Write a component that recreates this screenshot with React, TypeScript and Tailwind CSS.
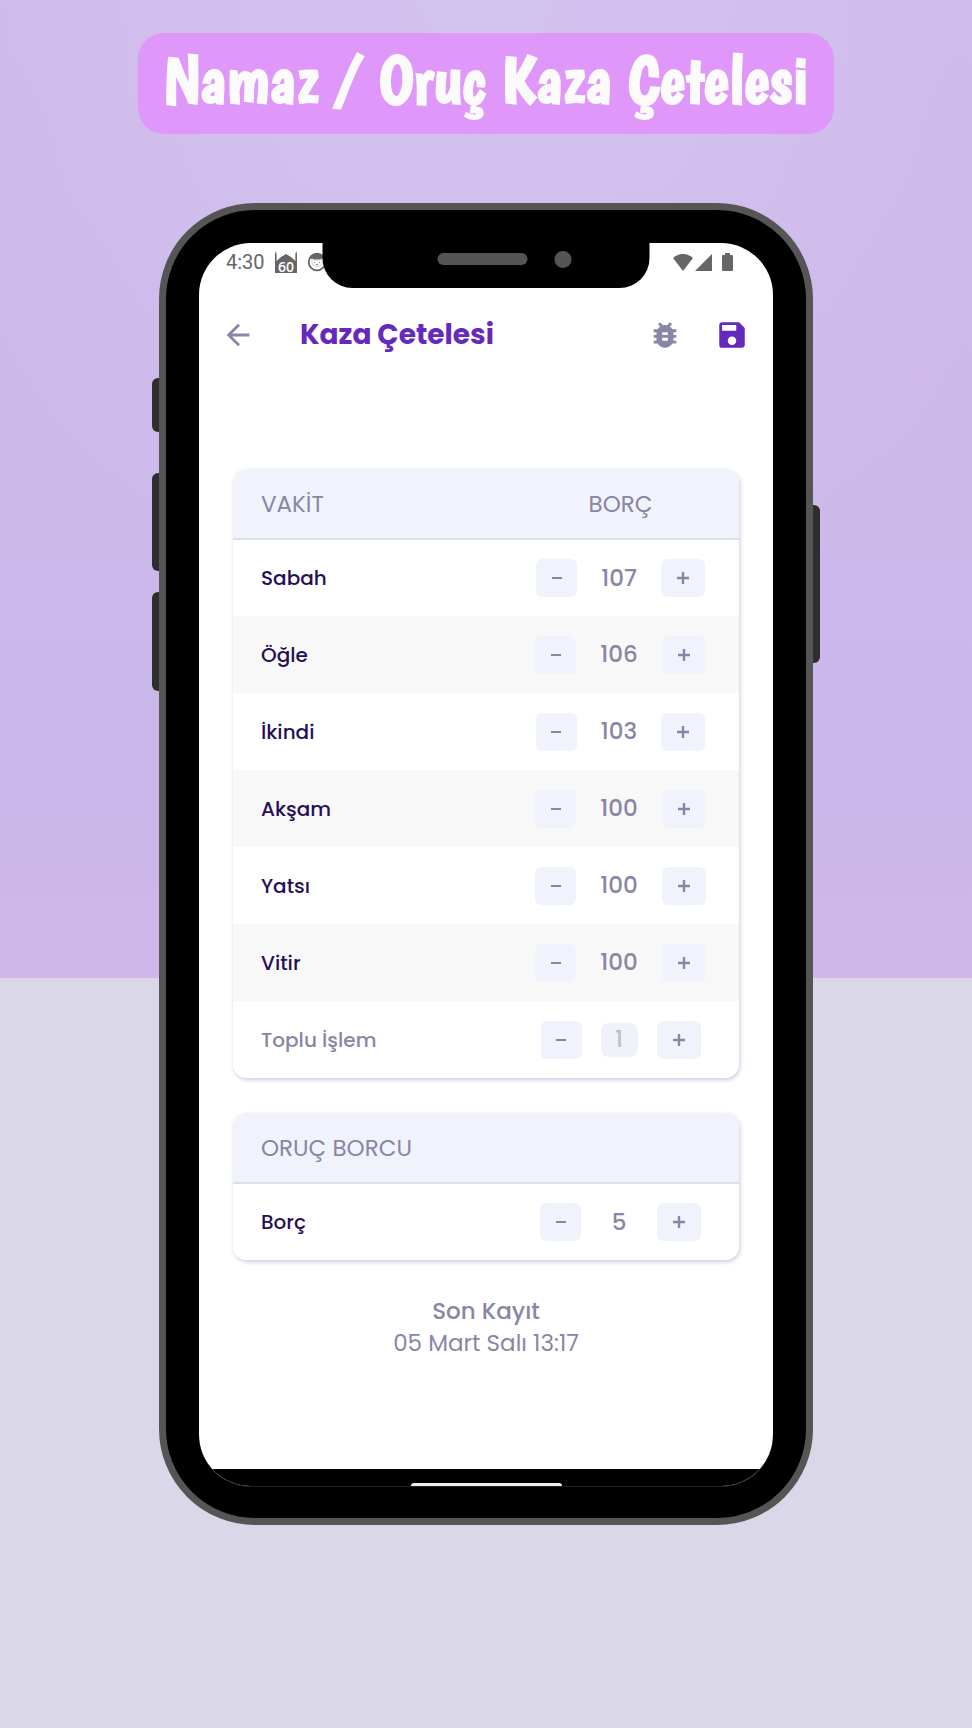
import { useState } from "react";
import { MdArrowBack, MdBugReport, MdSave } from "react-icons/md";

const FONT = "font-['Poppins','Noto_Sans',sans-serif]";

const PRAYERS = [
  { name: "Sabah", debt: 107 },
  { name: "Öğle", debt: 106 },
  { name: "İkindi", debt: 103 },
  { name: "Akşam", debt: 100 },
  { name: "Yatsı", debt: 100 },
  { name: "Vitir", debt: 100 },
];

function MinusButton({ label, onClick }: { label: string; onClick: () => void }) {
  return (
    <button
      type="button"
      aria-label={label}
      onClick={onClick}
      className="flex h-[38px] w-[41px] shrink-0 items-center justify-center rounded-md bg-[#f0f3fb]"
    >
      <span className="h-[2px] w-[10px] bg-[#8886a5]" />
    </button>
  );
}

function PlusButton({ label, onClick }: { label: string; onClick: () => void }) {
  return (
    <button
      type="button"
      aria-label={label}
      onClick={onClick}
      className="flex h-[38px] w-[44px] shrink-0 items-center justify-center rounded-md bg-[#f0f3fb] text-[#8886a5]"
    >
      <svg viewBox="0 0 12 12" className="size-3" aria-hidden="true">
        <path d="M6 0v12M0 6h12" stroke="currentColor" strokeWidth="2.400" />
      </svg>
    </button>
  );
}

function Row({ name, initial, striped }: { name: string; initial: number; striped?: boolean }) {
  const [value, setValue] = useState(initial);
  return (
    <tr className={striped ? "h-[77px] bg-[#f8f8f8]" : "h-[77px] bg-white"}>
      <th scope="row" className="pl-7 text-left text-xl font-medium text-[#260f57]">
        {name}
      </th>
      <td>
        <div className="flex items-center justify-center gap-6">
          <MinusButton label={`${name} azalt`} onClick={() => setValue(value - 1)} />
          <span className="min-w-[28px] text-center text-[23px] font-medium text-[#8886a5]">{value}</span>
          <PlusButton label={`${name} artır`} onClick={() => setValue(value + 1)} />
        </div>
      </td>
    </tr>
  );
}

function BulkRow() {
  const [value, setValue] = useState("1");
  const step = (n: number) => setValue(String(Number(value || 0) + n));
  return (
    <tr className="h-[77px] bg-white">
      <th scope="row" className="pl-7 text-left text-xl font-medium text-[#8886a5]">
        <label htmlFor="bulk">Toplu İşlem</label>
      </th>
      <td>
        <div className="flex items-center justify-center gap-[19px]">
          <MinusButton label="Toplu azalt" onClick={() => step(-1)} />
          <input
            id="bulk"
            inputMode="numeric"
            value={value}
            onChange={(e) => setValue(e.target.value)}
            className="h-[34px] w-[37px] rounded-lg bg-[#f0f2fa] text-center text-[23px] font-medium text-[#c0bdd0] outline-none"
          />
          <PlusButton label="Toplu artır" onClick={() => step(1)} />
        </div>
      </td>
    </tr>
  );
}

const CARD =
  "overflow-hidden rounded-[14px] bg-white shadow-[1px_2px_4px_rgba(60,40,130,0.25)]";
const HEAD = "h-[70px] border-b-2 border-[#dbe0ec] bg-[#f0f3fb] text-[23px] text-[#8886a5]";

function MosqueIcon() {
  return (
    <svg viewBox="0 0 22 22" className="size-[22px]" aria-hidden="true">
      <path
        d="M0 22V3L.800 0 1.600 3V10L6 6 11 3 16 6 20.400 10V3L21.200 0 22 3V22Z"
        fill="#666"
      />
      <text x="11" y="20.500" textAnchor="middle" fontSize="14" fontWeight="600" fill="#fff" fontFamily="Open Sans, sans-serif">
        60
      </text>
    </svg>
  );
}

function CatIcon() {
  return (
    <svg viewBox="0 0 20 20" className="size-5" aria-hidden="true">
      <circle cx="10" cy="10" r="8.300" fill="#fff" stroke="#666" strokeWidth="1.800" />
      <path d="M2.500 6C6-.500 14-.500 17.500 6L14 7.500H6Z" fill="#666" />
      <path d="M5 6.500 7.500 8H12.500L15 6.500V11C15 15.500 5 15.500 5 11Z" fill="#fff" stroke="#aaa" strokeWidth=".6" />
      <path d="M7.500 10v1M12.500 10v1M9 12.500h2" stroke="#888" />
    </svg>
  );
}

function StatusBar() {
  return (
    <div className="flex h-[38px] items-center justify-between pl-[27px] pr-[40px] text-[#666]">
      <div className="flex items-center gap-[10px]">
        <span className="font-['Roboto',sans-serif] text-xl leading-5">4:30</span>
        <MosqueIcon />
        <CatIcon />
      </div>
      <div className="flex items-center">
        <svg viewBox="0 0 20 17" className="mr-[2px] h-[17px] w-5" aria-hidden="true">
          <path d="M0 4C6-1.300 14-1.300 20 4L10 17Z" fill="currentColor" />
        </svg>
        <svg viewBox="0 0 17 17" className="mr-2.5 size-[17px]" aria-hidden="true">
          <path d="M17 0V17H0Z" fill="currentColor" />
        </svg>
        <svg viewBox="0 0 11 18" className="h-[18px] w-[11px]" aria-hidden="true">
          <path d="M3 0h5v2H10a1 1 0 0 1 1 1v14a1 1 0 0 1-1 1H1a1 1 0 0 1-1-1V3a1 1 0 0 1 1-1h2Z" fill="currentColor" />
        </svg>
      </div>
    </div>
  );
}

export default function App() {
  return (
    <div
      className={`${FONT} min-h-screen bg-[linear-gradient(transparent_978px,#dad7e8_978px),radial-gradient(600px_700px_at_50%_0,#d3c3ef_0,transparent_100%),linear-gradient(#cfbaea_0,#cdb8ea_500px,#cab7e9_740px,#cfb7e9_978px)] pb-[203px] pt-[33px]`}
    >
      <h1 className="mx-auto flex h-[101px] w-[696px] max-w-full items-center justify-center rounded-[26px] bg-[#df98f9] pb-2 font-['Chewy','Boogaloo','Bubblegum_Sans','Liberation_Sans',sans-serif] text-[67px] font-normal leading-none text-[#fbfbfb] [-webkit-text-stroke:2px_#fbfbfb]">
        Namaz / Oruç Kaza Çetelesi
      </h1>

      <div className="relative mx-auto mt-[69px] w-[654px] max-w-full">
        <span className="absolute -left-[7px] top-[175px] h-[54px] w-3 rounded-l-md bg-[#2e2e2e]" />
        <span className="absolute -left-[7px] top-[270px] h-[98px] w-3 rounded-l-md bg-[#2e2e2e]" />
        <span className="absolute -left-[7px] top-[389px] h-[99px] w-3 rounded-l-md bg-[#2e2e2e]" />
        <span className="absolute -right-[7px] top-[302px] h-[158px] w-3 rounded-r-md bg-[#2e2e2e]" />

        <div className="relative rounded-[96px] border-[7px] border-[#555] bg-black px-[33px] pb-[31px] pt-[33px]">
          <div className="absolute left-1/2 top-[33px] h-[45px] w-[327px] -translate-x-1/2 rounded-b-[30px] bg-black">
            <span className="absolute left-[115px] top-[10px] h-3 w-[90px] rounded-full bg-[#555]" />
            <span className="absolute left-[232px] top-[8px] size-[17px] rounded-full bg-[#555]" />
          </div>

          <div className="overflow-hidden rounded-[52px] border-b border-[#222] bg-white">
            <StatusBar />

            <header className="mt-[31px] flex h-[46px] items-center pl-[22px] pr-6 text-[#8886a5]">
              <button type="button" aria-label="Geri">
                <MdArrowBack className="size-[34px]" />
              </button>
              <h2 className="ml-[45px] text-[28px] font-bold text-[#6529bd]">Kaza Çetelesi</h2>
              <button type="button" aria-label="Hata bildir" className="ml-auto">
                <MdBugReport className="size-[34px]" />
              </button>
              <button type="button" aria-label="Kaydet" className="ml-[33px] text-[#6529bd]">
                <MdSave className="size-[34px]" />
              </button>
            </header>

            <main className="flex flex-col gap-[35px] px-[34px] pt-[111px]">
              <div className={CARD}>
                <table className="w-full table-fixed border-collapse">
                  <thead>
                    <tr className={HEAD}>
                      <th scope="col" className="pl-7 pt-0.5 text-left font-normal">VAKİT</th>
                      <th scope="col" className="w-[237px] pt-0.5 font-normal">BORÇ</th>
                    </tr>
                  </thead>
                  <tbody>
                    {PRAYERS.map((p, i) => (
                      <Row key={p.name} name={p.name} initial={p.debt} striped={i % 2 === 1} />
                    ))}
                    <BulkRow />
                  </tbody>
                </table>
              </div>

              <div className={CARD}>
                <table className="w-full table-fixed border-collapse">
                  <thead>
                    <tr className={HEAD}>
                      <th scope="col" className="pl-7 pt-0.5 text-left font-normal">ORUÇ BORCU</th>
                      <th scope="col" className="w-[237px]" aria-label="Borç" />
                    </tr>
                  </thead>
                  <tbody>
                    <Row name="Borç" initial={5} />
                  </tbody>
                </table>
              </div>
            </main>

            <footer className="pt-[35px] text-center text-[23px] leading-8 text-[#8886a5]">
              <p className="font-medium">Son Kayıt</p>
              <p>05 Mart Salı 13:17</p>
            </footer>

            <div className="mt-[110px] flex h-[17px] items-end justify-center bg-black">
              <span className="h-[3px] w-[151px] rounded-t-sm bg-[#eee]" />
            </div>
          </div>
        </div>
      </div>
    </div>
  );
}
